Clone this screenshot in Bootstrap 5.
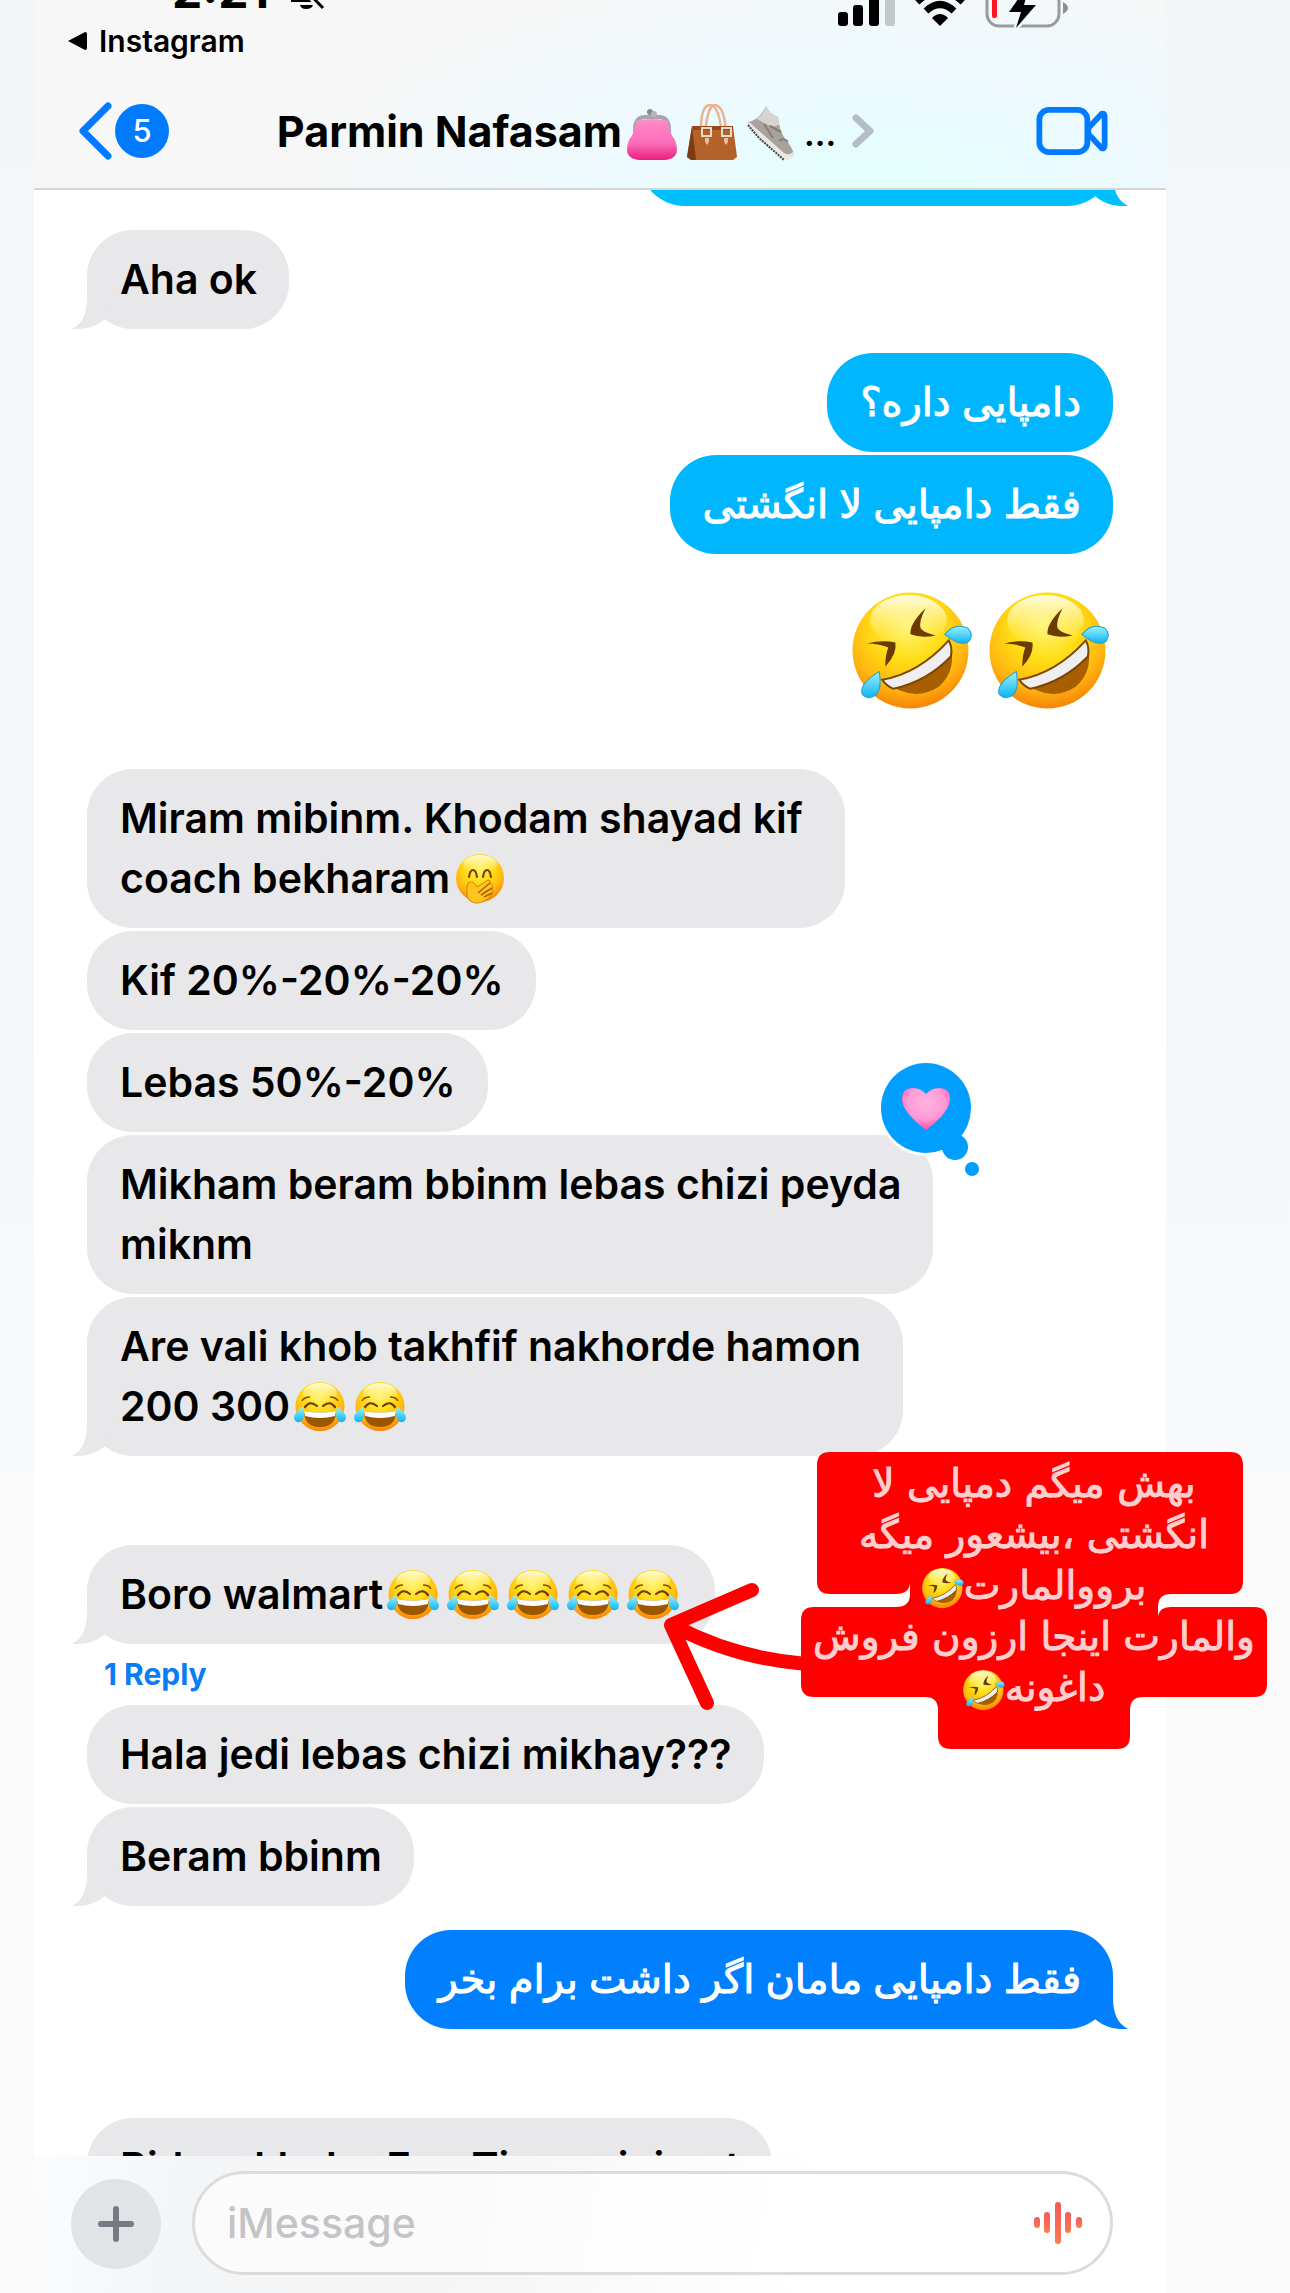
<!DOCTYPE html>
<html lang="en">
<head>
<meta charset="utf-8">
<meta name="viewport" content="width=device-width, initial-scale=1">
<title>Messages</title>
<link href="https://cdn.jsdelivr.net/npm/bootstrap@5.3.0/dist/css/bootstrap.min.css" rel="stylesheet">
<style>
body{font-family:Inter,"DejaVu Sans",sans-serif;font-size:41px;line-height:60px;font-weight:600;color:#000;
 background:linear-gradient(#f2f6f7 0,#f2f6f7 163px,#f5f6f9 164px,#f5f6f9 900px,#f8f9fa 1474px,#fafafa 1475px)}
.backdrop-page{padding:0 124px 0 34px}
.phone{background:#fff}
.topbar{height:190px;border-bottom:2px solid #d3d6d8;background:radial-gradient(560px 230px at 74% 100%,#e2fffd 0,#ecfaff 45%,#f7f7f7 100%)}
.statusbar{height:60px;margin-top:-30px;padding:0 98px 0 138px}
.clock{font-size:48px;font-weight:700;line-height:58px;margin-top:-8px}
.backapp{font-size:30px;font-weight:600;line-height:30px;margin-top:-4px;padding-left:33px;color:#000}
.navrow{height:84px;padding:0 58px 0 44px;margin-top:33px}
.unread{width:54px;height:54px;margin-left:3px;background:#007aff;color:#fff;font-size:31px;font-weight:500;line-height:54px}
.contact{font-size:43px;font-weight:700;color:#000;margin-right:54px}
.thread{min-height:0;padding:0 53px}
.bubble{position:relative;width:fit-content;padding:19px 32px 20px 33px;border-radius:46px;background:#e8e8ea}
.wrapped{padding-right:42px}
.stack{display:flex;flex-direction:column;gap:3px}
.after-turn{margin-top:24px}
.after-pause{margin-top:89px}
.after-emoji{margin-top:58px}
.sent{align-self:flex-end;color:#fff;font-size:40px;font-weight:400;-webkit-text-stroke:1px #fff;background:#00b7ff}
.tail{position:absolute;bottom:0;left:-15px;width:46px;height:46px;fill:#e8e8ea}
.sent .tail{left:auto;right:-15px;transform:scaleX(-1);fill:inherit}
.hidden-top{width:474px;margin-top:-83px;background:#00bfff;fill:#00bfff}
.latest{background:#007fff;fill:#007fff}
.em{width:52px;height:52px;margin:-10px 4px;vertical-align:-2px}
.bigems{margin-top:36px;padding-right:3px}
.bigem{width:121px;height:121px}
.tapback{position:absolute;right:-47px;top:-75px;width:104px;height:120px}
.reply{font-size:30px;font-weight:700;line-height:34px;color:#0a7cf5;margin:13px 0 14px 17px}
.note{position:absolute;left:630px;top:1452px;width:640px;height:310px}
.noteshape{position:absolute;left:0;top:0}
.notetext{position:absolute;left:171px;top:6px;width:466px;font-family:"DejaVu Sans",sans-serif;font-weight:400;font-size:39px;line-height:51px;color:#ffcfcf;-webkit-text-stroke:1px #ffcfcf}
.notetext .em{width:42px;height:46px;margin:-10px 0;vertical-align:-2px}
.composer{height:137px;padding:15px 53px 0 37px;background:linear-gradient(100deg,#fbfcfd 0,#f4f5f7 14%,#f6f6f6 40%,#fff 68%)}
.plus{width:90px;height:90px;background:#e1e3e7}
.inputwrap{height:104px;border:3px solid #dcdcdd;border-radius:52px;margin-left:31px;background:rgba(255,255,255,.6);padding:0 28px 0 32px}
.inputwrap input{font-size:41px;font-weight:500;line-height:60px;border:0;background:none;outline:0;padding:0}
.inputwrap input::placeholder{color:#c4c4c6;opacity:1}
</style>
</head>
<body>
<svg width="0" height="0" class="position-absolute" aria-hidden="true">
<defs>
<radialGradient id="face" cx=".48" cy=".3" r=".72"><stop offset="0" stop-color="#fff36a"/><stop offset=".42" stop-color="#ffdc14"/><stop offset=".75" stop-color="#ffb410"/><stop offset="1" stop-color="#f57e06"/></radialGradient>
<linearGradient id="shine" x2="0" y2="1"><stop offset="0" stop-color="#fffde4"/><stop offset="1" stop-color="#fff27a" stop-opacity="0"/></linearGradient>
<linearGradient id="tear" x2="0" y2="1"><stop offset="0" stop-color="#9df0ff"/><stop offset="1" stop-color="#0db4f2"/></linearGradient>
<linearGradient id="pink" x2="0" y2="1"><stop offset="0" stop-color="#ff8cc8"/><stop offset=".6" stop-color="#fb6cb8"/><stop offset="1" stop-color="#e81e7c"/></linearGradient>
<radialGradient id="heart" cx=".5" cy=".35" r=".65"><stop offset="0" stop-color="#ffb3e0"/><stop offset=".6" stop-color="#ff9ad6"/><stop offset="1" stop-color="#ff4da6"/></radialGradient>
<linearGradient id="wave" x2="0" y2="1"><stop offset="0" stop-color="#f5585f"/><stop offset="1" stop-color="#fb7d4c"/></linearGradient>
</defs>
<symbol id="rofl" viewBox="0 0 120 120">
<circle cx="58" cy="60" r="57.500" fill="url(#face)"/><ellipse cx="56" cy="30" rx="38" ry="25" fill="url(#shine)"/>
<path d="M15 53Q30 49 43 52Q45 63 33 76Q33 64 36 57Q26 53 15 53Z" fill="#6d3a00"/>
<path d="M73 18Q66 31 68 38Q72 43 83 45Q69 48 58 44Q57 33 73 18Z" fill="#6d3a00"/>
<path d="M30 89Q66 83 96 50Q106 78 86 96Q60 113 30 89Z" fill="#a85f00"/>
<path d="M30 89Q66 83 96 50Q100 58 98 66Q74 91 41 98Q34 95 30 89Z" fill="#efeff2" stroke="#7c4500" stroke-width="2"/>
<path d="M92 44Q102 32 115 38Q121 44 116 51Q108 57 92 44Z" fill="url(#tear)" stroke="#1b9fd0"/>
<path d="M27 81Q30 97 24 104Q16 110 10 103Q7 93 27 81Z" fill="url(#tear)" stroke="#1b9fd0"/>
</symbol>
<symbol id="joy" viewBox="0 0 52 52">
<circle cx="26" cy="25.500" r="24.500" fill="url(#face)"/><ellipse cx="26" cy="12" rx="17" ry="10" fill="url(#shine)"/>
<path d="M8 20Q10 16 16 16M44 20Q42 16 36 16" fill="none" stroke="#8a4d00" stroke-width="1.500"/>
<path d="M11 26Q16 19 23 25M29 25Q36 19 41 26" fill="none" stroke="#6d3a00" stroke-width="2.200" stroke-linecap="round"/>
<path d="M10 30Q26 33 42 30Q42 46 26 46Q10 46 10 30Z" fill="#9b5600"/><path d="M10 30Q26 33 42 30L41 35Q26 39 11 35Z" fill="#fff"/>
<path d="M9 26Q12 38 6 41Q0 42 0 36Q1 31 9 26Z" fill="url(#tear)"/><path d="M43 26Q40 38 46 41Q52 42 52 36Q51 31 43 26Z" fill="url(#tear)"/>
</symbol>
<symbol id="giggle" viewBox="0 0 52 52">
<circle cx="26" cy="25" r="24" fill="url(#face)"/><ellipse cx="26" cy="11" rx="17" ry="9" fill="url(#shine)"/>
<path d="M15 24Q16 17 19 17Q22 17 23 24M29 24Q30 17 33 17Q36 17 37 24" fill="none" stroke="#7b4300" stroke-width="2.200" stroke-linecap="round"/>
<path d="M14 30Q20 27 23 34L34 27Q37 27 36 30L38 32Q40 34 38 36Q40 39 37 41Q37 45 28 49Q21 52 15 47Q11 40 14 30Z" fill="#ffc51c" stroke="#d98206"/>
<path d="M24 40L36 30M27 42L38 35M30 44L38 40" stroke="#a95f08" stroke-width="1.500"/>
</symbol>
<symbol id="purse" viewBox="0 0 52 60">
<path d="M9 32Q8 17 18 16H34Q44 17 43 32" fill="none" stroke="#a9a5ac" stroke-width="4"/><circle cx="24" cy="11" r="3" fill="#8d8990"/><circle cx="28" cy="13" r="3" fill="#b8b4ba"/>
<path d="M10 20Q26 16 42 20Q43 32 49 39Q56 58 38 59H14Q-4 58 3 39Q9 32 10 20Z" fill="url(#pink)"/>
</symbol>
<symbol id="bag" viewBox="0 0 52 60">
<path d="M15 34Q14 4 24 4Q33 4 36 34M19 32Q22 3 29 4Q39 5 40 34" fill="none" stroke="#ecb393" stroke-width="2.500"/>
<path d="M6 25H47L51 56L47 59H5L1 56Z" fill="#b4622a"/><path d="M6 25L10 59H5L1 56Z" fill="#7d3c12"/>
<path d="M7 25H47V29H7Z" fill="#944a1a"/><path d="M16 27h9v8h-9zM36 27h9v8h-9z" fill="none" stroke="#e6dcca" stroke-width="2"/><path d="M19 37h4v4l-2 3-2-3zM38 37h4v4l-2 3-2-3z" fill="#edbb9b"/>
</symbol>
<symbol id="shoe" viewBox="0 0 50 62">
<path d="M20 6Q23 14 32 17Q33 29 39 39Q49 50 47 56Q43 61 37 58L4 28L2 22Q14 20 20 6Z" fill="#a8a29d"/>
<path d="M20 6Q23 14 32 17L33 25Q26 28 18 23L11 19Q18 14 20 6Z" fill="#d6d4d2"/>
<path d="M2 21L12 30L38 53Q43 56 47 52Q48 60 40 60L4 31Z" fill="#e9e7e4"/>
<path d="M2 25L13 38L38 60" fill="none" stroke="#444" stroke-width="2" stroke-dasharray="2 1"/><path d="M18 24L27 38M24 26L35 32M33 41Q38 37 42 42" stroke="#857e78" stroke-width="2" fill="none"/>
</symbol>
<symbol id="tailshape" viewBox="0 0 46 46"><path d="M15 0V14C15 30 11 40 0 46C14 47 25 43 33 36L46 0Z"/></symbol>
</svg>
<div class="backdrop-page">
<div class="phone vh-100 d-flex flex-column overflow-hidden">
<header class="topbar flex-shrink-0 overflow-hidden">
<div class="statusbar d-flex justify-content-between align-items-start">
<div class="d-flex align-items-start"><span class="clock">2:21</span>
<svg width="42" height="44" viewBox="0 0 42 44" class="ms-3"><path d="M6 30Q10 22 10 14Q12 4 21 4Q31 4 31 14Q31 24 36 32H6ZM15 35H28Q27 39 21 39Q16 39 15 35Z"/><path d="M3 2L38 38" stroke="#f7f7f7" stroke-width="8"/><path d="M3 2L38 38" stroke="#000" stroke-width="3"/></svg></div>
<svg width="230" height="60" viewBox="0 0 230 60"><rect x="0" y="42" width="10" height="14" rx="3"/><rect x="15" y="35" width="10" height="21" rx="3"/><rect x="31" y="27" width="10" height="29" rx="3"/><rect x="47" y="18" width="10" height="38" rx="3" fill="#c2c7c9"/>
<path d="M102 56L94 48Q102 40 110 48Z"/><path d="M88 41Q102 28 116 41" fill="none" stroke="#000" stroke-width="7"/><path d="M79 32Q102 10 125 32" fill="none" stroke="#000" stroke-width="7"/>
<rect x="149" y="18" width="72" height="38" rx="12" fill="none" stroke="#999c9e" stroke-width="3"/><rect x="154" y="22" width="5" height="26" rx="2" fill="#ff1522"/><path d="M225 32Q230 35 230 38Q230 41 225 44Z" fill="#8b8e90"/><path d="M192 12L171 42H183L178 58L198 35H186Z" stroke="#effaff" stroke-width="5" paint-order="stroke"/></svg>
</div>
<a href="#" class="backapp d-flex align-items-center text-decoration-none"><svg width="20" height="20" viewBox="0 0 20 20" class="me-2"><path d="M1 10L18 1Q20 1 20 3V17Q20 19 18 19Z"/></svg><span class="ms-1">Instagram</span></a>
<nav class="navrow d-flex align-items-center justify-content-between">
<a href="#" class="d-flex align-items-center text-decoration-none"><svg width="34" height="58" viewBox="0 0 34 58"><path d="M30 4L5 29L30 54" fill="none" stroke="#007aff" stroke-width="7" stroke-linecap="round" stroke-linejoin="round"/></svg><span class="unread rounded-circle text-center">5</span></a>
<a href="#" class="contact d-flex align-items-center text-decoration-none"><span>Parmin Nafasam</span><svg width="52" height="60" class="ms-1"><use href="#purse"/></svg><svg width="52" height="60" class="mx-2"><use href="#bag"/></svg><svg width="50" height="62"><use href="#shoe"/></svg><span class="ms-2 fs-2 lh-1 pt-2">...</span><svg width="22" height="34" viewBox="0 0 22 34" class="ms-3"><path d="M4 4L18 17L4 30" fill="none" stroke="#b3bec7" stroke-width="7" stroke-linecap="round" stroke-linejoin="round"/></svg></a>
<button class="btn p-0 border-0 d-flex" aria-label="Video call"><svg width="72" height="48" viewBox="0 0 74 50"><g fill="none" stroke="#007aff" stroke-width="6" stroke-linejoin="round"><rect x="3" y="3" width="50" height="44" rx="10"/><path d="M54 22L68 7Q71 6 71 10V40Q71 44 68 43L54 28Z"/></g></svg></button>
</nav>
</header>
<main class="thread flex-grow-1 overflow-hidden">
<div class="stack">
<div class="bubble sent hidden-top">&nbsp;<svg class="tail"><use href="#tailshape"/></svg></div>
</div>
<div class="stack after-turn">
<div class="bubble">Aha ok<svg class="tail"><use href="#tailshape"/></svg></div>
</div>
<div class="stack after-turn">
<div class="bubble sent" dir="rtl">دامپایی داره؟</div>
<div class="bubble sent" dir="rtl">فقط دامپایی لا انگشتی</div>
</div>
<div class="bigems d-flex justify-content-end gap-3"><svg class="bigem"><use href="#rofl"/></svg><svg class="bigem"><use href="#rofl"/></svg></div>
<div class="stack after-emoji">
<div class="bubble wrapped">Miram mibinm. Khodam shayad kif<br>coach bekharam<svg class="em"><use href="#giggle"/></svg></div>
<div class="bubble">Kif 20%-20%-20%</div>
<div class="bubble">Lebas 50%-20%</div>
<div class="bubble">Mikham beram bbinm lebas chizi peyda<br>miknm
<svg class="tapback" viewBox="0 0 104 120"><circle cx="50" cy="48" r="48" fill="#fff"/><g fill="#009fff"><circle cx="50" cy="48" r="45"/><circle cx="79" cy="87" r="13"/><circle cx="96" cy="109" r="7"/></g><path d="M50 70Q26 52 26 39Q26 28 37 28Q45 28 50 34Q55 28 63 28Q74 28 74 39Q74 52 50 70Z" fill="url(#heart)"/></svg></div>
<div class="bubble wrapped">Are vali khob takhfif nakhorde hamon<br>200 300<svg class="em"><use href="#joy"/></svg><svg class="em"><use href="#joy"/></svg><svg class="tail"><use href="#tailshape"/></svg></div>
</div>
<div class="stack after-pause">
<div class="bubble">Boro walmart<svg class="em"><use href="#joy"/></svg><svg class="em"><use href="#joy"/></svg><svg class="em"><use href="#joy"/></svg><svg class="em"><use href="#joy"/></svg><svg class="em"><use href="#joy"/></svg><svg class="tail"><use href="#tailshape"/></svg></div>
</div>
<div class="d-flex"><a href="#" class="reply text-decoration-none">1 Reply</a></div>
<div class="stack">
<div class="bubble">Hala jedi lebas chizi mikhay???</div>
<div class="bubble">Beram bbinm<svg class="tail"><use href="#tailshape"/></svg></div>
</div>
<div class="stack after-turn">
<div class="bubble sent latest" dir="rtl">فقط دامپایی مامان اگر داشت برام بخر<svg class="tail"><use href="#tailshape"/></svg></div>
</div>
<div class="stack after-pause"><div class="bubble">Bidam khabe Eno Time minimet</div></div>
</main>
<footer class="composer d-flex align-items-start flex-shrink-0">
<button class="plus btn rounded-circle border-0 p-0 mt-2 flex-shrink-0 d-flex align-items-center justify-content-center" aria-label="Add"><svg width="36" height="36" viewBox="0 0 36 36"><path d="M18 3V33M3 18H33" stroke="#767a84" stroke-width="6" stroke-linecap="round"/></svg></button>
<div class="inputwrap flex-grow-1 d-flex align-items-center"><input type="text" class="flex-grow-1" placeholder="iMessage" aria-label="iMessage">
<svg width="48" height="44" viewBox="0 0 48 44"><g fill="url(#wave)"><rect x="0" y="16" width="6" height="11" rx="3"/><rect x="10" y="11" width="6" height="21" rx="3"/><rect x="21" y="1" width="6" height="42" rx="3"/><rect x="31" y="11" width="6" height="21" rx="3"/><rect x="42" y="16" width="6" height="11" rx="3"/></g></svg></div>
</footer>
</div>
</div>
<aside class="note">
<svg class="noteshape" width="640" height="300" viewBox="0 0 640 300"><path d="M200 0H600Q613 0 613 13V129Q613 142 600 142H541Q528 142 528 155V165Q529 155 541 155H624Q637 155 637 168V232Q637 245 624 245H513Q500 245 500 258V284Q500 297 487 297H321Q308 297 308 284V258Q308 245 295 245H184Q171 245 171 232V168Q171 155 184 155H266Q280 155 280 142V131Q279 142 266 142H200Q187 142 187 129V13Q187 0 200 0Z" fill="#f00"/><path d="M122 138L41 173L77 251M46 175Q105 206 176 212" fill="none" stroke="#f00" stroke-width="14" stroke-linecap="round" stroke-linejoin="round"/></svg>
<div class="notetext text-center" dir="rtl">بهش میگم دمپایی لا<br>انگشتی ،بیشعور میگه<br>برووالمارت<svg class="em"><use href="#rofl"/></svg><br>والمارت اینجا ارزون فروش<br>داغونه<svg class="em"><use href="#rofl"/></svg></div>
</aside>
<script src="https://cdn.jsdelivr.net/npm/bootstrap@5.3.0/dist/js/bootstrap.bundle.min.js"></script>
</body>
</html>
